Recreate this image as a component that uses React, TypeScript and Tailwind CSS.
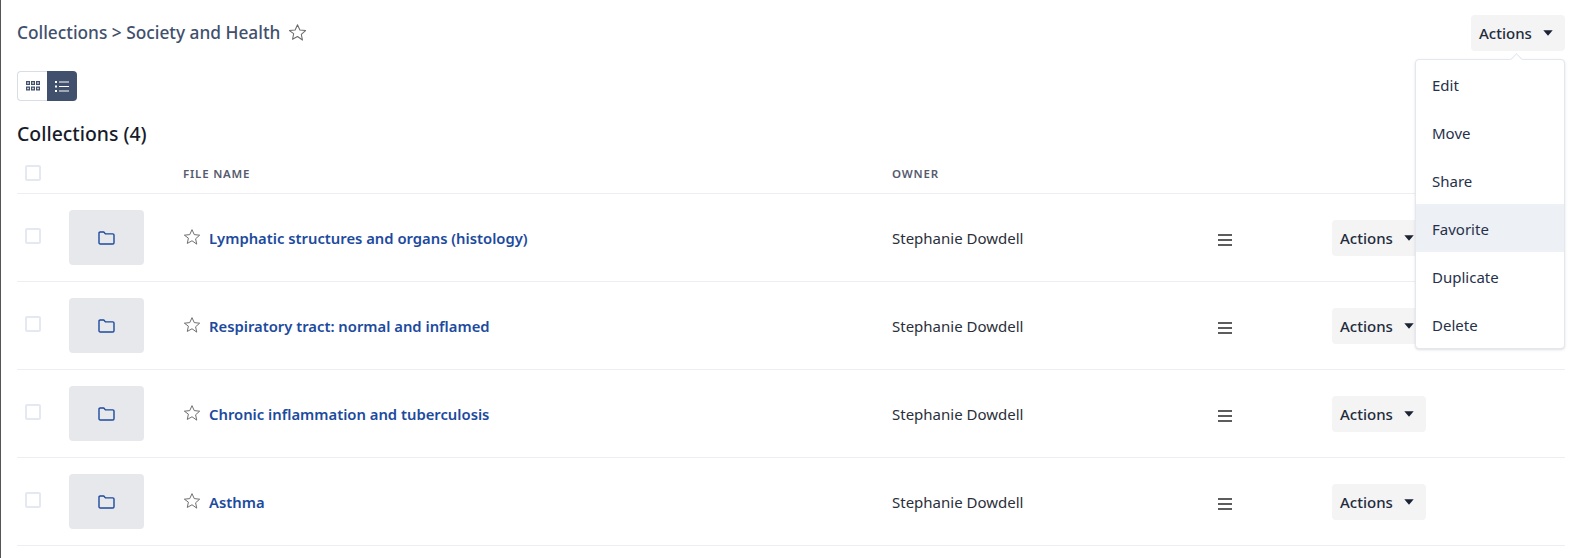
import React from "react";

const font = { fontFamily: '"Noto Sans", "Open Sans", sans-serif' };

function Star({ size = 18 }: { size?: number }) {
  return (
    <svg width={size} height={size} viewBox="0 0 24 24" fill="#fff" stroke="#6b6b6b" strokeWidth="1.3" strokeLinejoin="round" className="shrink-0">
      <path d="M12 2.2l3 6.6 7.2.8-5.4 4.8 1.5 7.1L12 17l-6.3 3.6 1.5-7.1L1.8 9.6 9 8.8z" />
    </svg>
  );
}

function Caret() {
  return (
    <svg width="10" height="6" viewBox="0 0 10 6" className="shrink-0">
      <path d="M0.3 0.3h9.4L5 5.7z" fill="#1a2233" />
    </svg>
  );
}

function ActionsButton() {
  return (
    <button className="flex h-9 w-[94px] items-center rounded-[4px] bg-[#f4f4f5] pl-2 text-[15px] font-medium text-[#222b3c]">
      <span className="pt-px">Actions</span>
      <span className="ml-[11px]"><Caret /></span>
    </button>
  );
}

function Checkbox() {
  return <div className="h-4 w-4 rounded-[2px] border-2 border-[#e4e9f1] bg-white" />;
}

function Folder() {
  return (
    <svg width="17" height="14" viewBox="0 0 17 14" fill="none" stroke="#1c4a9e" strokeWidth="1.4" strokeLinejoin="round">
      <path d="M1 2.2C1 1.5 1.5 1 2.2 1h3.6l1.6 1.9h7.3c.7 0 1.3.5 1.3 1.2v7.6c0 .7-.6 1.3-1.3 1.3H2.2c-.7 0-1.2-.6-1.2-1.3z" />
    </svg>
  );
}

function Bars() {
  return (
    <div className="flex w-[14px] flex-col gap-[3px]">
      <div className="h-[2px] bg-[#5c5c5c]" />
      <div className="h-[2px] bg-[#5c5c5c]" />
      <div className="h-[2px] bg-[#5c5c5c]" />
    </div>
  );
}

const gridCols = "grid grid-cols-[52px_114px_709px_326px_114px_1fr] items-center";

function Row({ name }: { name: string }) {
  return (
    <div className={`${gridCols} h-[88px] border-b border-[#eceef1]`}>
      <div className="mb-[3px] pl-2"><Checkbox /></div>
      <div className="flex h-[55px] w-[75px] items-center justify-center rounded-[4px] bg-[#e7e8ec]"><Folder /></div>
      <div className="flex items-center">
        <span className="-mt-[2px]"><Star /></span>
        <a className="ml-[8px] pt-px text-[14.8px] font-semibold text-[#1c4a9e]">{name}</a>
      </div>
      <div className="pt-px text-[15px] text-[#2a2f3a]">Stephanie Dowdell</div>
      <div className="pt-[5px]"><Bars /></div>
      <div><ActionsButton /></div>
    </div>
  );
}

const rows = [
  "Lymphatic structures and organs (histology)",
  "Respiratory tract: normal and inflamed",
  "Chronic inflammation and tuberculosis",
  "Asthma",
];

const menu = ["Edit", "Move", "Share", "Favorite", "Duplicate", "Delete"];

export default function App() {
  return (
    <div style={font} className="relative h-[558px] overflow-hidden border-l border-[#555555] bg-white pl-4 pr-4 pt-[15px]">
      <div className="absolute left-[-1px] top-[219px] h-[50px] w-px bg-[#1d5fd0]" />

      <div className="flex h-9 items-center justify-between">
        <div className="-mt-px flex items-center text-[17.3px] font-medium text-[#41506d]">
          <span className="pt-px">Collections &gt; Society and Health</span>
          <span className="ml-2"><Star size={19} /></span>
        </div>
        <ActionsButton />
      </div>

      <div className="mt-5 flex h-[30px] w-[60px]">
        <div className="flex w-[30px] items-center justify-center rounded-l-[4px] border border-r-0 border-[#d8dde6] bg-white">
          <svg width="14" height="10" viewBox="0 0 14 10" fill="#41506d">
            <path fillRule="evenodd" d="M0 0h4v4H0zM1.3 1.3v1.4h1.4V1.3zM5 0h4v4H5zM6.3 1.3v1.4h1.4V1.3zM10 0h4v4h-4zM11.3 1.3v1.4h1.4V1.3zM0 5.5h4v4H0zM1.3 6.8v1.4h1.4V6.8zM5 5.5h4v4H5zM6.3 6.8v1.4h1.4V6.8zM10 5.5h4v4h-4zM11.3 6.8v1.4h1.4V6.8z" />
          </svg>
        </div>
        <div className="flex w-[30px] items-center justify-center rounded-r-[4px] bg-[#41506d]">
          <svg width="14" height="11" viewBox="0 0 14 11" fill="#fff">
            <rect x="0" y="0" width="2" height="2" />
            <rect x="0" y="4.5" width="2" height="2" />
            <rect x="0" y="9" width="2" height="2" />
            <rect x="4" y="0.5" width="10" height="1" />
            <rect x="4" y="5" width="10" height="1" />
            <rect x="4" y="9.5" width="10" height="1" />
          </svg>
        </div>
      </div>

      <div className="mt-5 h-[26px] text-[19.4px] font-medium leading-[26px] text-[#161c2b]">Collections (4)</div>

      <div className={`${gridCols} h-[47px] border-b border-[#eceef1] pt-[6px]`}>
        <div className="pl-2"><Checkbox /></div>
        <div />
        <div className="pt-px text-[11.5px] font-semibold tracking-[0.07em] text-[#555a6e]">FILE NAME</div>
        <div className="pt-px text-[11.5px] font-semibold tracking-[0.07em] text-[#555a6e]">OWNER</div>
        <div />
        <div />
      </div>

      {rows.map((r) => <Row key={r} name={r} />)}

      <div className="absolute left-[1414px] top-[59px] w-[150px] rounded-[4px] border border-[#e3e7ef] bg-white shadow-sm">
        <div className="absolute -top-[5px] left-[96px] h-[9px] w-[9px] rotate-45 border-l border-t border-[#e3e7ef] bg-white" />
        {menu.map((m) => (
          <div key={m} className={`relative flex h-12 items-center pl-4 pt-[3px] text-[15px] text-[#26304a] ${m === "Favorite" ? "bg-[#edf1f5]" : ""}`}>{m}</div>
        ))}
      </div>
    </div>
  );
}
